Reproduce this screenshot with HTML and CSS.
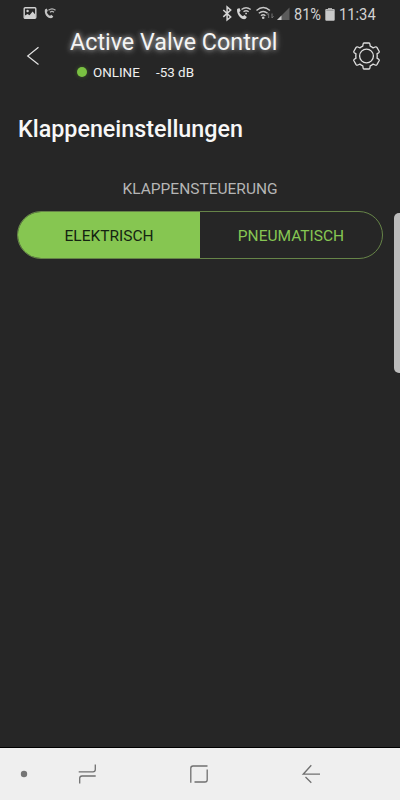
FILE: index.html
```html
<!DOCTYPE html>
<html lang="de">
<head>
<meta charset="utf-8">
<title>Active Valve Control</title>
<link rel="stylesheet" href="styles.css">
</head>
<body>
<div class="screen">
  <div class="statusbar">
    <svg class="notifications" width="36" height="16" viewBox="0 0 36 16">
      <rect x="1.2" y="1.7" width="11.6" height="10.6" rx="1" fill="none" stroke="#d0d0d0" stroke-width="1.4"/>
      <circle cx="4.6" cy="5" r="1.2" fill="#d0d0d0"/>
      <path d="M2 12V9.5L4.5 8l2 1.2L9.6 5.500l2.600 3V12z" fill="#d0d0d0"/>
      <path d="M22 3.500l1.700-.9 1.200 2.300-1.100 1c.5 1.700 1.700 3.100 3.300 3.800l1.200-1 2 1.700-1.200 1.700C24.500 13 20.800 8 22 3.500z" fill="#c4c4c4"/>
      <path d="M25.500 4.300q3.500-2.800 7 0M27 6.200q2-1.500 4 0" fill="none" stroke="#b8b8b8" stroke-width="1.200"/>
    </svg>
    <svg class="signals" width="72" height="18" viewBox="220 5 72 18">
      <path d="M223.300 10l7.400 7-3.600 3V7l3.600 3.100-7.400 6.800" fill="none" stroke="#d4d4d4" stroke-width="1.500"/>
      <path d="M237.300 9l2.100-1 1.300 3-1.400 1c.6 2 1.900 3.500 3.700 4.200l1.300-1.200 2.600 1.900-1.500 2.200c-4.700 1-9.600-5.500-8.100-11.100z" fill="#d4d4d4"/>
      <path d="M241.500 9.500q4.600-3.600 9.200 0M243.500 11.800q2.600-2 5.200 0M245.200 13.500h1.800" fill="none" stroke="#c4c4c4" stroke-width="1.400"/>
      <path d="M256.500 10.500q6.700-6 13.400 0M258.800 13.300q4.400-3.700 8.800 0M261 15.800q2.200-1.900 4.400 0" fill="none" stroke="#c8c8c8" stroke-width="1.400"/>
      <circle cx="263.200" cy="17.800" r="1.300" fill="#c8c8c8"/>
      <path d="M268.700 18v-4.500l-1.500 1.700M272 13.500V18l1.500-1.700" fill="none" stroke="#777" stroke-width="1"/>
      <path d="M289.500 7.500V20H277z" fill="#5b5b5b"/>
      <path d="M281.500 15.500V20H277z" fill="#c8c8c8"/>
    </svg>
    <span class="percent">81%</span>
    <svg class="battery" width="10" height="14" viewBox="0 0 10 14">
      <path d="M3 1h4v1.500H3z" fill="#aaa"/>
      <rect x=".3" y="2" width="9.400" height="11.700" rx="1" fill="#c9c9c9"/>
      <path d="M1.300 3.200h7.400" stroke="#8f8f8f"/>
    </svg>
    <span class="clock">11:34</span>
  </div>

  <header class="header">
    <svg class="back" width="14" height="20" viewBox="0 0 14 20">
      <path d="M12.500 1.300L1.700 10l10.800 8.500" fill="none" stroke="#e2e2e2" stroke-width="1.200"/>
    </svg>
    <div class="heading">
      <h1 class="title">Active Valve Control</h1>
      <div class="state"><span class="dot"></span><span class="online">ONLINE</span><span class="level">-53 dB</span></div>
    </div>
    <svg class="gear" width="28" height="28" viewBox="-14.500 -14 28 28" fill="none" stroke="#dedede" stroke-width="1.300" stroke-linejoin="round">
      <circle r="6.900"/>
      <path d="M-2.500-13H2.500Q3.300-13 3.400-12L3.700-9.900Q5.300-9.300 6.600-8.100L8.600-9Q9.800-9.500 10.400-8.600L12.600-4.700Q13-3.900 12.200-3.300L10.500-2.100Q10.900 0 10.500 2.100L12.200 3.300Q13 3.900 12.600 4.700L10.400 8.600Q9.800 9.500 8.600 9L6.600 8.100Q5.300 9.300 3.700 9.900L3.400 12Q3.300 13 2.500 13H-2.500Q-3.300 13-3.400 12L-3.700 9.900Q-5.300 9.300-6.600 8.100L-8.600 9Q-9.800 9.500-10.400 8.600L-12.600 4.700Q-13 3.900-12.200 3.300L-10.500 2.100Q-10.900 0-10.500-2.100L-12.200-3.300Q-13-3.900-12.600-4.700L-10.400-8.600Q-9.800-9.500-8.600-9L-6.600-8.100Q-5.300-9.300-3.700-9.900L-3.400-12Q-3.300-13-2.500-13Z"/>
    </svg>
  </header>

  <main class="content">
    <h2 class="section">Klappeneinstellungen</h2>
    <p class="label"><span>KLAPPENSTEUERUNG</span></p>
    <div class="segments">
      <button class="segment active"><span class="electric">ELEKTRISCH</span></button>
      <button class="segment"><span class="pneumatic">PNEUMATISCH</span></button>
    </div>
  </main>
  <div class="edge-handle"></div>

  <nav class="navbar">
    <svg width="400" height="51" viewBox="0 749 400 51" fill="none" stroke="#707070" stroke-width="1.300">
      <circle cx="24" cy="774" r="3.200" fill="#757575" stroke="none"/>
      <path d="M78.700 771.800H93q2.300 0 2.300-2.300V764.500M95.700 776H82q-2.300 0-2.300 2.300V783.500"/>
      <path d="M207.500 766H193q-2.200 0-2.200 2.200V782.700M194.500 782H205q2.200 0 2.200-2.200V769.500"/>
      <path d="M320 774.200H303.200L311.300 765.200M305.500 777L311.300 782.800"/>
    </svg>
  </nav>
</div>
</body>
</html>
```
FILE: styles.css
```css
* { box-sizing: border-box; }
body { margin: 0; font-family: Roboto, sans-serif; }
h1, h2, p { margin: 0; }
svg { display: block; flex: none; }
span { white-space: nowrap; }

.screen {
  position: relative;
  display: flex;
  flex-direction: column;
  width: 400px;
  height: 800px;
  overflow: hidden;
  background: #262626;
}

.statusbar {
  display: flex;
  align-items: center;
  height: 28px;
  padding-left: 23px;
  color: #d2d2d2;
  font-size: 16px;
}
.notifications { margin-top: -1px; }
.signals { margin-left: 161px; }
.percent { width: 28px; margin-left: 2px; transform: scaleX(.91); transform-origin: left; }
.battery { margin-left: 3px; }
.clock { margin-left: 4px; transform: scaleX(.92); transform-origin: left; }

.header {
  display: flex;
  height: 62px;
  padding-left: 26px;
}
.back { margin-top: 18px; }
.heading { width: 282px; margin-left: 30px; }
.title {
  height: 28px;
  color: #f4f4f4;
  font-size: 23.3px;
  font-weight: 400;
  line-height: 28px;
  white-space: nowrap;
  text-shadow: 0 0 5px rgba(255, 255, 255, .6), 0 1px 8px rgba(255, 255, 255, .3);
}
.state {
  display: flex;
  align-items: center;
  height: 32px;
  padding-left: 7px;
  color: #f0f0f0;
  font-size: 13.4px;
}
.dot {
  width: 10px;
  height: 10px;
  border-radius: 50%;
  background: #7ac142;
  box-shadow: 0 0 4px rgba(110, 190, 50, .35);
}
.online { width: 47px; margin-left: 6px; }
.level { margin-left: 16px; }
.gear { margin-top: 14px; }

.content {
  flex: 1;
  padding: 23px 17px 0;
}
.section {
  height: 32px;
  padding-left: 1px;
  color: #f7f7f7;
  font-size: 23.3px;
  font-weight: 500;
  line-height: 32px;
}
.label {
  height: 24px;
  margin: 32px 0 10px;
  color: #b5b5b5;
  font-size: 15.5px;
  line-height: 24px;
  text-align: center;
}
.segments {
  display: flex;
  width: 366px;
  height: 48px;
  overflow: hidden;
  border: 1px solid #668448;
  border-radius: 24px;
}
.segment {
  display: flex;
  flex: 1;
  align-items: center;
  justify-content: center;
  padding: 1px 0 0;
  border: 0;
  background: none;
  color: #86c653;
  font: 400 15.5px Roboto, sans-serif;
}
.segment.active { background: #86c651; color: #152411; }

.edge-handle {
  position: absolute;
  top: 213px;
  right: 0;
  width: 6px;
  height: 160px;
  border-radius: 5px 0 0 5px;
  background: #bcbcbc;
}
.navbar {
  height: 53px;
  border-top: 1px solid #000;
  padding-top: 1px;
  background: #efefef;
}
```
